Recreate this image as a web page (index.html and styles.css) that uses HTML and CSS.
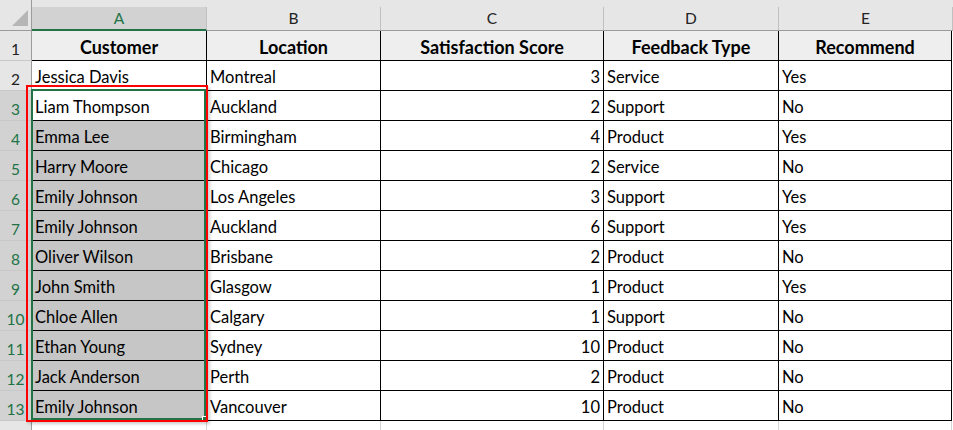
FILE: index.html
```html
<!DOCTYPE html>
<html>
<head>
<meta charset="utf-8">
<link rel="stylesheet" href="styles.css">
</head>
<body>
<div class="sheet">
  <div class="topbar"></div>
  <div class="grid">
    <div class="corner"><span class="tri"></span></div>
    <div class="colhdr sel">A</div>
    <div class="colhdr">B</div>
    <div class="colhdr">C</div>
    <div class="colhdr">D</div>
    <div class="colhdr last">E</div>

    <div class="rowhdr">1</div>
    <div class="cell head">Customer</div>
    <div class="cell head">Location</div>
    <div class="cell head">Satisfaction Score</div>
    <div class="cell head">Feedback Type</div>
    <div class="cell head">Recommend</div>

    <div class="rowhdr">2</div>
    <div class="cell">Jessica Davis</div>
    <div class="cell">Montreal</div>
    <div class="cell num">3</div>
    <div class="cell">Service</div>
    <div class="cell">Yes</div>

    <div class="rowhdr rsel">3</div>
    <div class="cell active">Liam Thompson</div>
    <div class="cell">Auckland</div>
    <div class="cell num">2</div>
    <div class="cell">Support</div>
    <div class="cell">No</div>

    <div class="rowhdr rsel">4</div>
    <div class="cell hl">Emma Lee</div>
    <div class="cell">Birmingham</div>
    <div class="cell num">4</div>
    <div class="cell">Product</div>
    <div class="cell">Yes</div>

    <div class="rowhdr rsel">5</div>
    <div class="cell hl">Harry Moore</div>
    <div class="cell">Chicago</div>
    <div class="cell num">2</div>
    <div class="cell">Service</div>
    <div class="cell">No</div>

    <div class="rowhdr rsel">6</div>
    <div class="cell hl">Emily Johnson</div>
    <div class="cell">Los Angeles</div>
    <div class="cell num">3</div>
    <div class="cell">Support</div>
    <div class="cell">Yes</div>

    <div class="rowhdr rsel">7</div>
    <div class="cell hl">Emily Johnson</div>
    <div class="cell">Auckland</div>
    <div class="cell num">6</div>
    <div class="cell">Support</div>
    <div class="cell">Yes</div>

    <div class="rowhdr rsel">8</div>
    <div class="cell hl">Oliver Wilson</div>
    <div class="cell">Brisbane</div>
    <div class="cell num">2</div>
    <div class="cell">Product</div>
    <div class="cell">No</div>

    <div class="rowhdr rsel">9</div>
    <div class="cell hl">John Smith</div>
    <div class="cell">Glasgow</div>
    <div class="cell num">1</div>
    <div class="cell">Product</div>
    <div class="cell">Yes</div>

    <div class="rowhdr rsel">10</div>
    <div class="cell hl">Chloe Allen</div>
    <div class="cell">Calgary</div>
    <div class="cell num">1</div>
    <div class="cell">Support</div>
    <div class="cell">No</div>

    <div class="rowhdr rsel">11</div>
    <div class="cell hl">Ethan Young</div>
    <div class="cell">Sydney</div>
    <div class="cell num">10</div>
    <div class="cell">Product</div>
    <div class="cell">No</div>

    <div class="rowhdr rsel">12</div>
    <div class="cell hl">Jack Anderson</div>
    <div class="cell">Perth</div>
    <div class="cell num">2</div>
    <div class="cell">Product</div>
    <div class="cell">No</div>

    <div class="rowhdr rsel">13</div>
    <div class="cell hl">Emily Johnson</div>
    <div class="cell">Vancouver</div>
    <div class="cell num">10</div>
    <div class="cell">Product</div>
    <div class="cell">No</div>

    <div class="rowhdr tail"></div>
    <div class="cell tail"></div>
    <div class="cell tail"></div>
    <div class="cell tail"></div>
    <div class="cell tail"></div>
    <div class="cell tail"></div>
  </div>
  <div class="selbox"><span class="handle"></span></div>
  <div class="redbox"></div>
</div>
</body>
</html>
```

FILE: styles.css
```css
* { box-sizing: border-box; }
html, body { margin: 0; padding: 0; background: #ffffff; }
body {
  font-family: "Lato", "Open Sans", sans-serif;
  font-size: 16.5px;
  color: #000;
  width: 953px;
  height: 430px;
  overflow: hidden;
}
.sheet { position: relative; width: 953px; height: 430px; background: #fff; }
.topbar { height: 7px; background: #e6e6e6; }
.grid {
  display: grid;
  grid-template-columns: 32px 175px 174px 223px 175px 173px 1fr;
  grid-template-rows: 24px repeat(13, 30px) 10px;
}
.grid > .last { grid-column: span 2; }
.corner {
  background: #e6e6e6;
  border-right: 1px solid #9b9b9b;
  border-bottom: 1px solid #9b9b9b;
  position: relative;
  margin-top: -7px;
  height: 31px;
}
.tri {
  position: absolute;
  left: 12px;
  top: 10px;
  width: 0; height: 0;
  border-left: 16px solid transparent;
  border-bottom: 16px solid #b6b6b6;
}
.colhdr {
  background: #e6e6e6;
  border-right: 1px solid #c0c0c0;
  border-bottom: 1px solid #9b9b9b;
  text-align: center;
  font-size: 15.5px;
  line-height: 23px;
  color: #222;
}
.colhdr.sel {
  background: #d2d2d2;
  color: #217346;
  border-bottom: 2px solid #217346;
}
.rowhdr {
  grid-column: 1;
  background: #e6e6e6;
  border-right: 1px solid #9b9b9b;
  border-bottom: 1px solid #c8c8c8;
  font-size: 15.5px;
  color: #222;
  display: flex;
  align-items: flex-end;
  justify-content: center;
  padding-bottom: 2px;
}
.rowhdr.rsel { background: #d2d2d2; color: #217346; border-right-color: #217346; }
.rowhdr.tail { border-bottom: none; }
.cell {
  border-right: 1px solid #000;
  border-bottom: 1px solid #000;
  padding: 0 3px;
  display: flex;
  align-items: flex-end;
  padding-bottom: 3px;
  white-space: nowrap;
  overflow: hidden;
}
.cell.tail { border-bottom: none; border-right-color: #d4d4d4; }
.cell.head {
  background: #eeeeee;
  font-weight: bold;
  justify-content: center;
  font-size: 18px;
  padding-bottom: 2px;
}
.cell.num { justify-content: flex-end; }
.cell.hl { background: #c6c6c6; }
.selbox {
  position: absolute;
  left: 31px;
  top: 89px;
  width: 175px;
  height: 331px;
  border: 2px solid #217346;
  pointer-events: none;
}
.handle {
  position: absolute;
  right: -4px;
  bottom: -4px;
  width: 6px;
  height: 6px;
  background: #217346;
  border: 1px solid #fff;
}
.redbox {
  position: absolute;
  left: 26px;
  top: 85px;
  width: 182px;
  height: 337px;
  border: 2px solid #ff0000;
  box-shadow: 2px 2px 3px rgba(0,0,0,0.2);
  pointer-events: none;
}
```
